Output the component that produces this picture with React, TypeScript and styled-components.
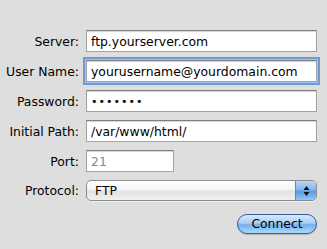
import React from 'react';
import styled, { createGlobalStyle } from 'styled-components';

const GlobalStyle = createGlobalStyle`
    html, body {
        margin: 0;
        padding: 0;
        background: #dedede;
    }
    body {
        font-family: "DejaVu Sans", "Liberation Sans", sans-serif;
        font-size: 12.4px;
        color: #000;
    }
`;

const Form = styled.form`
    width: 327px;
    height: 249px;
    box-sizing: border-box;
    margin: 0;
    padding: 30px 10px 0 0;
    display: grid;
    grid-template-columns: 79px 231px;
    grid-template-rows: repeat(5, 22px) 21px 20px;
    column-gap: 7px;
    row-gap: 8px;
    align-items: center;
    align-content: start;
`;

const Label = styled.label`
    display: block;
    text-align: right;
    white-space: nowrap;
    line-height: 15px;
`;

const TextField = styled.input<{ $width?: number; $focused?: boolean; $muted?: boolean }>`
    display: block;
    box-sizing: border-box;
    width: ${({ $width }) => ($width ? `${$width}px` : '100%')};
    height: 22px;
    margin: 0;
    padding: 1px 4px 0;
    font: inherit;
    font-size: 12.4px;
    line-height: 15px;
    color: ${({ $muted }) => ($muted ? '#8a8a8a' : '#000')};
    background: #fff;
    border: 1px solid #a3a3a3;
    border-top-color: #7f7f7f;
    border-radius: 0;
    box-shadow: ${({ $focused }) =>
        $focused
            ? 'inset 0 1px 1px rgba(0,0,0,0.18), 0 0 0 1px #a7c3e8, 0 0 0 3px #6f9ad6'
            : 'inset 0 1px 1px rgba(0,0,0,0.18)'};
    outline: none;
    &[type='password'] {
        letter-spacing: 1px;
        font-size: 11px;
    }
`;

const Select = styled.div`
    position: relative;
    box-sizing: border-box;
    height: 21px;
    border: 1px solid #8c8c8c;
    border-radius: 5px;
    background: linear-gradient(#ffffff 0%, #f4f4f4 45%, #e2e2e2 55%, #f0f0f0 100%);
    display: flex;
    align-items: center;
    padding-left: 8px;
    line-height: 15px;
    overflow: hidden;
    box-shadow: 0 1px 0 rgba(255, 255, 255, 0.5);
`;

const Stepper = styled.div`
    position: absolute;
    top: 0;
    right: 0;
    bottom: 0;
    width: 20px;
    border-left: 1px solid #5f86c6;
    background: linear-gradient(#bcd6f7 0%, #86b6ee 45%, #5a9ae6 55%, #8fc6fb 100%);
    display: flex;
    align-items: center;
    justify-content: center;
`;

const ButtonRow = styled.div`
    grid-column: 2;
    display: flex;
    justify-content: flex-end;
    margin-top: 10px;
`;

const ConnectButton = styled.button`
    box-sizing: border-box;
    width: 80px;
    height: 20px;
    margin: 0;
    padding: 0 0 1px;
    font: inherit;
    font-size: 12.4px;
    line-height: 15px;
    color: #000;
    border: 1px solid #3b5b9c;
    border-radius: 10px;
    background: linear-gradient(#d8e8fb 0%, #a9cdf4 45%, #76aeed 55%, #a8dcfd 100%);
    box-shadow: 0 1px 1px rgba(0, 0, 0, 0.2);
    cursor: pointer;
`;

export default function App() {
    return (
        <>
            <GlobalStyle />
            <Form onSubmit={(e) => e.preventDefault()}>
                <Label htmlFor="server">Server:</Label>
                <TextField id="server" defaultValue="ftp.yourserver.com" />

                <Label htmlFor="user">User Name:</Label>
                <TextField id="user" defaultValue="yourusername@yourdomain.com" $focused />

                <Label htmlFor="pass">Password:</Label>
                <TextField id="pass" type="password" defaultValue="1234567" />

                <Label htmlFor="path">Initial Path:</Label>
                <TextField id="path" defaultValue="/var/www/html/" />

                <Label htmlFor="port">Port:</Label>
                <TextField id="port" defaultValue="21" $width={88} $muted />

                <Label>Protocol:</Label>
                <Select>
                    FTP
                    <Stepper>
                        <svg width="7" height="12" viewBox="0 0 7 12">
                            <path d="M3.5 1 L6.5 5 L0.5 5 Z" fill="#111" />
                            <path d="M0.5 7 L6.5 7 L3.5 11 Z" fill="#111" />
                        </svg>
                    </Stepper>
                </Select>

                <ButtonRow>
                    <ConnectButton type="submit">Connect</ConnectButton>
                </ButtonRow>
            </Form>
        </>
    );
}
